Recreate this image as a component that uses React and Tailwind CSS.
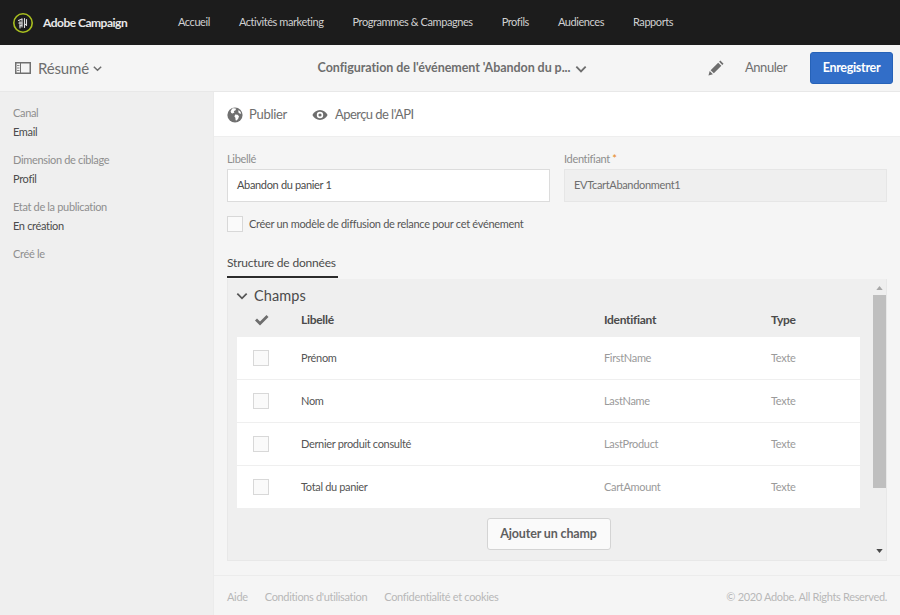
import React from "react";

function Logo() {
  return (
    <svg width="22" height="22" viewBox="0 0 22 22" fill="none" className="shrink-0">
      <circle cx="11" cy="11" r="9.2" stroke="#a9bf1f" strokeWidth="1.6" />
      <g stroke="#dedede" strokeWidth="1.100" strokeLinecap="round">
        <path d="M8 9.500v6.500M10 7v8M12.500 6.500v9M14.500 7.500v6" />
        <path d="M6.500 8.500l3.500-1.500M6.800 11h3.200M8 14l2-1M12.500 13l2-1" />
      </g>
    </svg>
  );
}

function SidebarIcon() {
  return (
    <svg width="16" height="12" viewBox="0 0 16 12" fill="none" className="shrink-0">
      <rect x="0.75" y="0.750" width="14.500" height="10.500" stroke="#707070" strokeWidth="1.500" />
      <path d="M5.500 1v10" stroke="#707070" strokeWidth="1" />
      <path d="M2 3.500h2.500M2 6h2.500M2 8.500h2.500" stroke="#8a8a8a" strokeWidth="1" />
    </svg>
  );
}

function Chevron({ size = 12, color = "#6e6e6e", width = 1.6 }) {
  return (
    <svg width={size} height={size} viewBox="0 0 12 12" fill="none" className="shrink-0">
      <path d="M2 4l4 4 4-4" stroke={color} strokeWidth={width} />
    </svg>
  );
}

function Pencil() {
  return (
    <svg width="16" height="16" viewBox="0 0 17 17" className="shrink-0">
      <path d="M0.500 16.500l1.300-4.700 3.400 3.400zM2.800 10.800l8-8 3.400 3.400-8 8zM11.800 1.800l1.300-1.300 3.400 3.400-1.300 1.300z" fill="#6e6e6e" />
    </svg>
  );
}

function Globe() {
  return (
    <svg width="16" height="16" viewBox="0 0 16 16" className="shrink-0">
      <circle cx="8" cy="8" r="7.600" fill="#707070" />
      <path d="M5.200 1.600c1.300-.5 3-.4 4 .2L8.300 3.400 6.800 4l.6 1.400-1.800 1.200-1.400-.6-.6-1.800zM8.200 7.600l2.400.2 1.400 1.400-.8 2.600-1.600 1.800-1-.4-.2-2.400-1-1.200zM11.500 3l2 1.800.7 2-1.600-.4-1.300-1.200z" fill="#fff" />
    </svg>
  );
}

function Eye() {
  return (
    <svg width="16" height="12" viewBox="0 0 16 12" className="shrink-0">
      <path fillRule="evenodd" d="M8 1c3.400 0 6.200 2.200 7.600 5C14.200 8.800 11.400 11 8 11S1.800 8.800.4 6C1.800 3.200 4.600 1 8 1zm0 1.800a3.200 3.200 0 100 6.400 3.200 3.200 0 000-6.400zm0 1.600a1.600 1.600 0 110 3.200 1.600 1.600 0 010-3.200z" fill="#6e6e6e" />
    </svg>
  );
}

function Check() {
  return (
    <svg width="15" height="12" viewBox="0 0 15 12" className="shrink-0">
      <path d="M1 6.500l2-2 3 3L12.500 1l2 2L6 11.500z" fill="#6e6e6e" />
    </svg>
  );
}

const nav = ["Accueil", "Activités marketing", "Programmes & Campagnes", "Profils", "Audiences", "Rapports"];
const side = [
  ["Canal", "Email"],
  ["Dimension de ciblage", "Profil"],
  ["Etat de la publication", "En création"],
  ["Créé le", null],
];
const rows = [
  ["Prénom", "FirstName"],
  ["Nom", "LastName"],
  ["Dernier produit consulté", "LastProduct"],
  ["Total du panier", "CartAmount"],
];

export default function App() {
  return (
    <div className="flex h-[615px] w-[900px] flex-col overflow-hidden bg-[#f5f5f5] font-['Lato','Liberation_Sans',sans-serif] text-[11px] tracking-[-0.33px] text-[#4b4b4b]">
      <header className="flex h-[45px] shrink-0 items-center bg-[#1c1c1c] pl-[12px] text-[#d0d0d0]">
        <Logo />
        <span className="ml-[9px] w-[135px] text-[12px] font-bold tracking-[-0.5px] text-[#e8e8e8]">Adobe Campaign</span>
        <nav className="flex gap-[29px] tracking-[-0.43px]">
          {nav.map((n) => (
            <span key={n}>{n}</span>
          ))}
        </nav>
      </header>

      <div className="flex h-[47px] shrink-0 items-center border-b border-[#e8e8e8] bg-[#f5f5f5] pl-[15px] pr-[7px]">
        <div className="flex w-[285px] items-center">
          <SidebarIcon />
          <span className="ml-[7px] text-[15px] tracking-[-0.15px] text-[#6e6e6e]">Résumé</span>
          <span className="ml-[3px]"><Chevron size={11} /></span>
        </div>
        <div className="flex w-[300px] items-center justify-center gap-[4px] pl-[6px] pt-[1px]">
          <span className="text-[12.500px] font-bold tracking-[-0.06px] text-[#6e6e6e]">Configuration de l'événement 'Abandon du p...</span>
          <Chevron size={14} />
        </div>
        <div className="ml-auto flex items-center">
          <Pencil />
          <span className="ml-[21px] text-[13px] tracking-[-0.45px] text-[#707070]">Annuler</span>
          <button className="ml-[23px] flex h-[32px] w-[83px] items-center justify-center rounded-[3px] border border-[#2662b8] bg-[#326ec8] text-[12.500px] font-bold tracking-[-0.3px] text-white">
            Enregistrer
          </button>
        </div>
      </div>

      <div className="flex min-h-0 flex-1">
        <aside className="flex w-[214px] shrink-0 flex-col gap-[14px] border-r border-[#ebebeb] bg-[#efefef] pl-[13px] pt-[14px]">
          {side.map(([a, b]) => (
            <div key={a} className="flex h-[33px] flex-col justify-between">
              <div className="leading-[14px] text-[#8e8e8e]">{a}</div>
              {b && <div className="leading-[15px] text-[#4b4b4b]">{b}</div>}
            </div>
          ))}
        </aside>

        <main className="flex min-w-0 flex-1 flex-col">
          <div className="flex h-[45px] shrink-0 items-center border-b border-[#eeeeee] bg-white pl-[13px] pt-[1px]">
            <Globe />
            <span className="ml-[6px] text-[13px] tracking-[-0.3px] text-[#6e6e6e]">Publier</span>
            <span className="ml-[25px]"><Eye /></span>
            <span className="ml-[7px] text-[13px] tracking-[-0.55px] text-[#6e6e6e]">Aperçu de l'API</span>
          </div>

          <div className="flex min-h-0 flex-1 flex-col pl-[13px] pr-[13px] pt-[14px]">
            <div className="flex gap-[14px]">
              <div className="w-[323px]">
                <div className="h-[18px] leading-[15px] text-[#8e8e8e]">Libellé</div>
                <div className="flex h-[33px] items-center border border-[#dcdcdc] bg-white pl-[9px] text-[#4b4b4b]">Abandon du panier 1</div>
              </div>
              <div className="flex-1">
                <div className="h-[18px] leading-[15px] text-[#8e8e8e]">Identifiant <span className="text-[#e68619]">*</span></div>
                <div className="flex h-[33px] items-center border border-[#e6e6e6] bg-[#efefef] pl-[9px] text-[#6e6e6e]">EVTcartAbandonment1</div>
              </div>
            </div>

            <div className="mt-[14px] flex items-center gap-[6px]">
              <span className="h-[16px] w-[16px] border border-[#d8d8d8] bg-[#fafafa]" />
              <span className="tracking-[-0.3px] text-[#555]">Créer un modèle de diffusion de relance pour cet événement</span>
            </div>

            <div className="mt-[21px] w-[111px] border-b-2 border-[#2c2c2c] pb-[5px] text-[12px] leading-[17px] tracking-[-0.2px] text-[#4b4b4b]">
              Structure de données
            </div>

            <section className="mt-[1px] flex h-[282px] border-x border-b border-[#e8e8e8] bg-[#efefef]">
              <div className="min-w-0 flex-1 pl-[9px] pr-[10px]">
                <div className="flex h-[29px] items-center gap-[5px] pt-[5px]">
                  <span className="-ml-[2px]"><Chevron size={14} color="#555" width={1.5} /></span>
                  <span className="text-[14.500px] leading-[20px] tracking-[0.1px] text-[#4b4b4b]">Champs</span>
                </div>
                <div className="flex h-[24px] items-center text-[12px] font-bold tracking-[-0.3px] text-[#4b4b4b]">
                  <span className="flex w-[64px] pl-[17px]"><Check /></span>
                  <span className="w-[303px]">Libellé</span>
                  <span className="w-[167px]">Identifiant</span>
                  <span>Type</span>
                </div>
                <div className="mt-[5px] flex flex-col gap-[1px] bg-[#efefef]">
                  {rows.map(([a, b]) => (
                    <div key={a} className="flex h-[42px] items-center bg-white">
                      <span className="flex w-[64px] pl-[16px]">
                        <span className="h-[16px] w-[16px] border border-[#d8d8d8] bg-[#fafafa]" />
                      </span>
                      <span className="w-[303px] pt-[2px] text-[#555]">{a}</span>
                      <span className="w-[167px] pt-[2px] text-[#9a9a9a]">{b}</span>
                      <span className="pt-[2px] text-[#9a9a9a]">Texte</span>
                    </div>
                  ))}
                </div>
                <div className="mt-[10px] flex justify-center">
                  <button className="flex h-[32px] w-[124px] items-center justify-center rounded-[3px] border border-[#d4d4d4] bg-[#fafafa] pt-[2px] text-[12.500px] font-bold tracking-[-0.15px] text-[#5f5f5f]">
                    Ajouter un champ
                  </button>
                </div>
              </div>
              <div className="flex w-[16px] shrink-0 flex-col items-center pl-[3px]">
                <svg width="7" height="4" viewBox="0 0 8 5" className="mt-[7px]"><path d="M0 5h8L4 0z" fill="#a8a8a8" /></svg>
                <div className="mt-[5px] h-[193px] w-[13px] bg-[#bfbfbf]" />
                <svg width="7" height="4" viewBox="0 0 8 5" className="mb-[7px] mt-auto"><path d="M0 0h8L4 5z" fill="#4a4a4a" /></svg>
              </div>
            </section>
          </div>

          <footer className="flex h-[40px] shrink-0 items-center gap-[17px] border-t border-[#ececec] pl-[13px] pr-[13px] pt-[3px] text-[#b8b8b8]">
            <span>Aide</span>
            <span>Conditions d'utilisation</span>
            <span>Confidentialité et cookies</span>
            <span className="ml-auto">© 2020 Adobe. All Rights Reserved.</span>
          </footer>
        </main>
      </div>
    </div>
  );
}
